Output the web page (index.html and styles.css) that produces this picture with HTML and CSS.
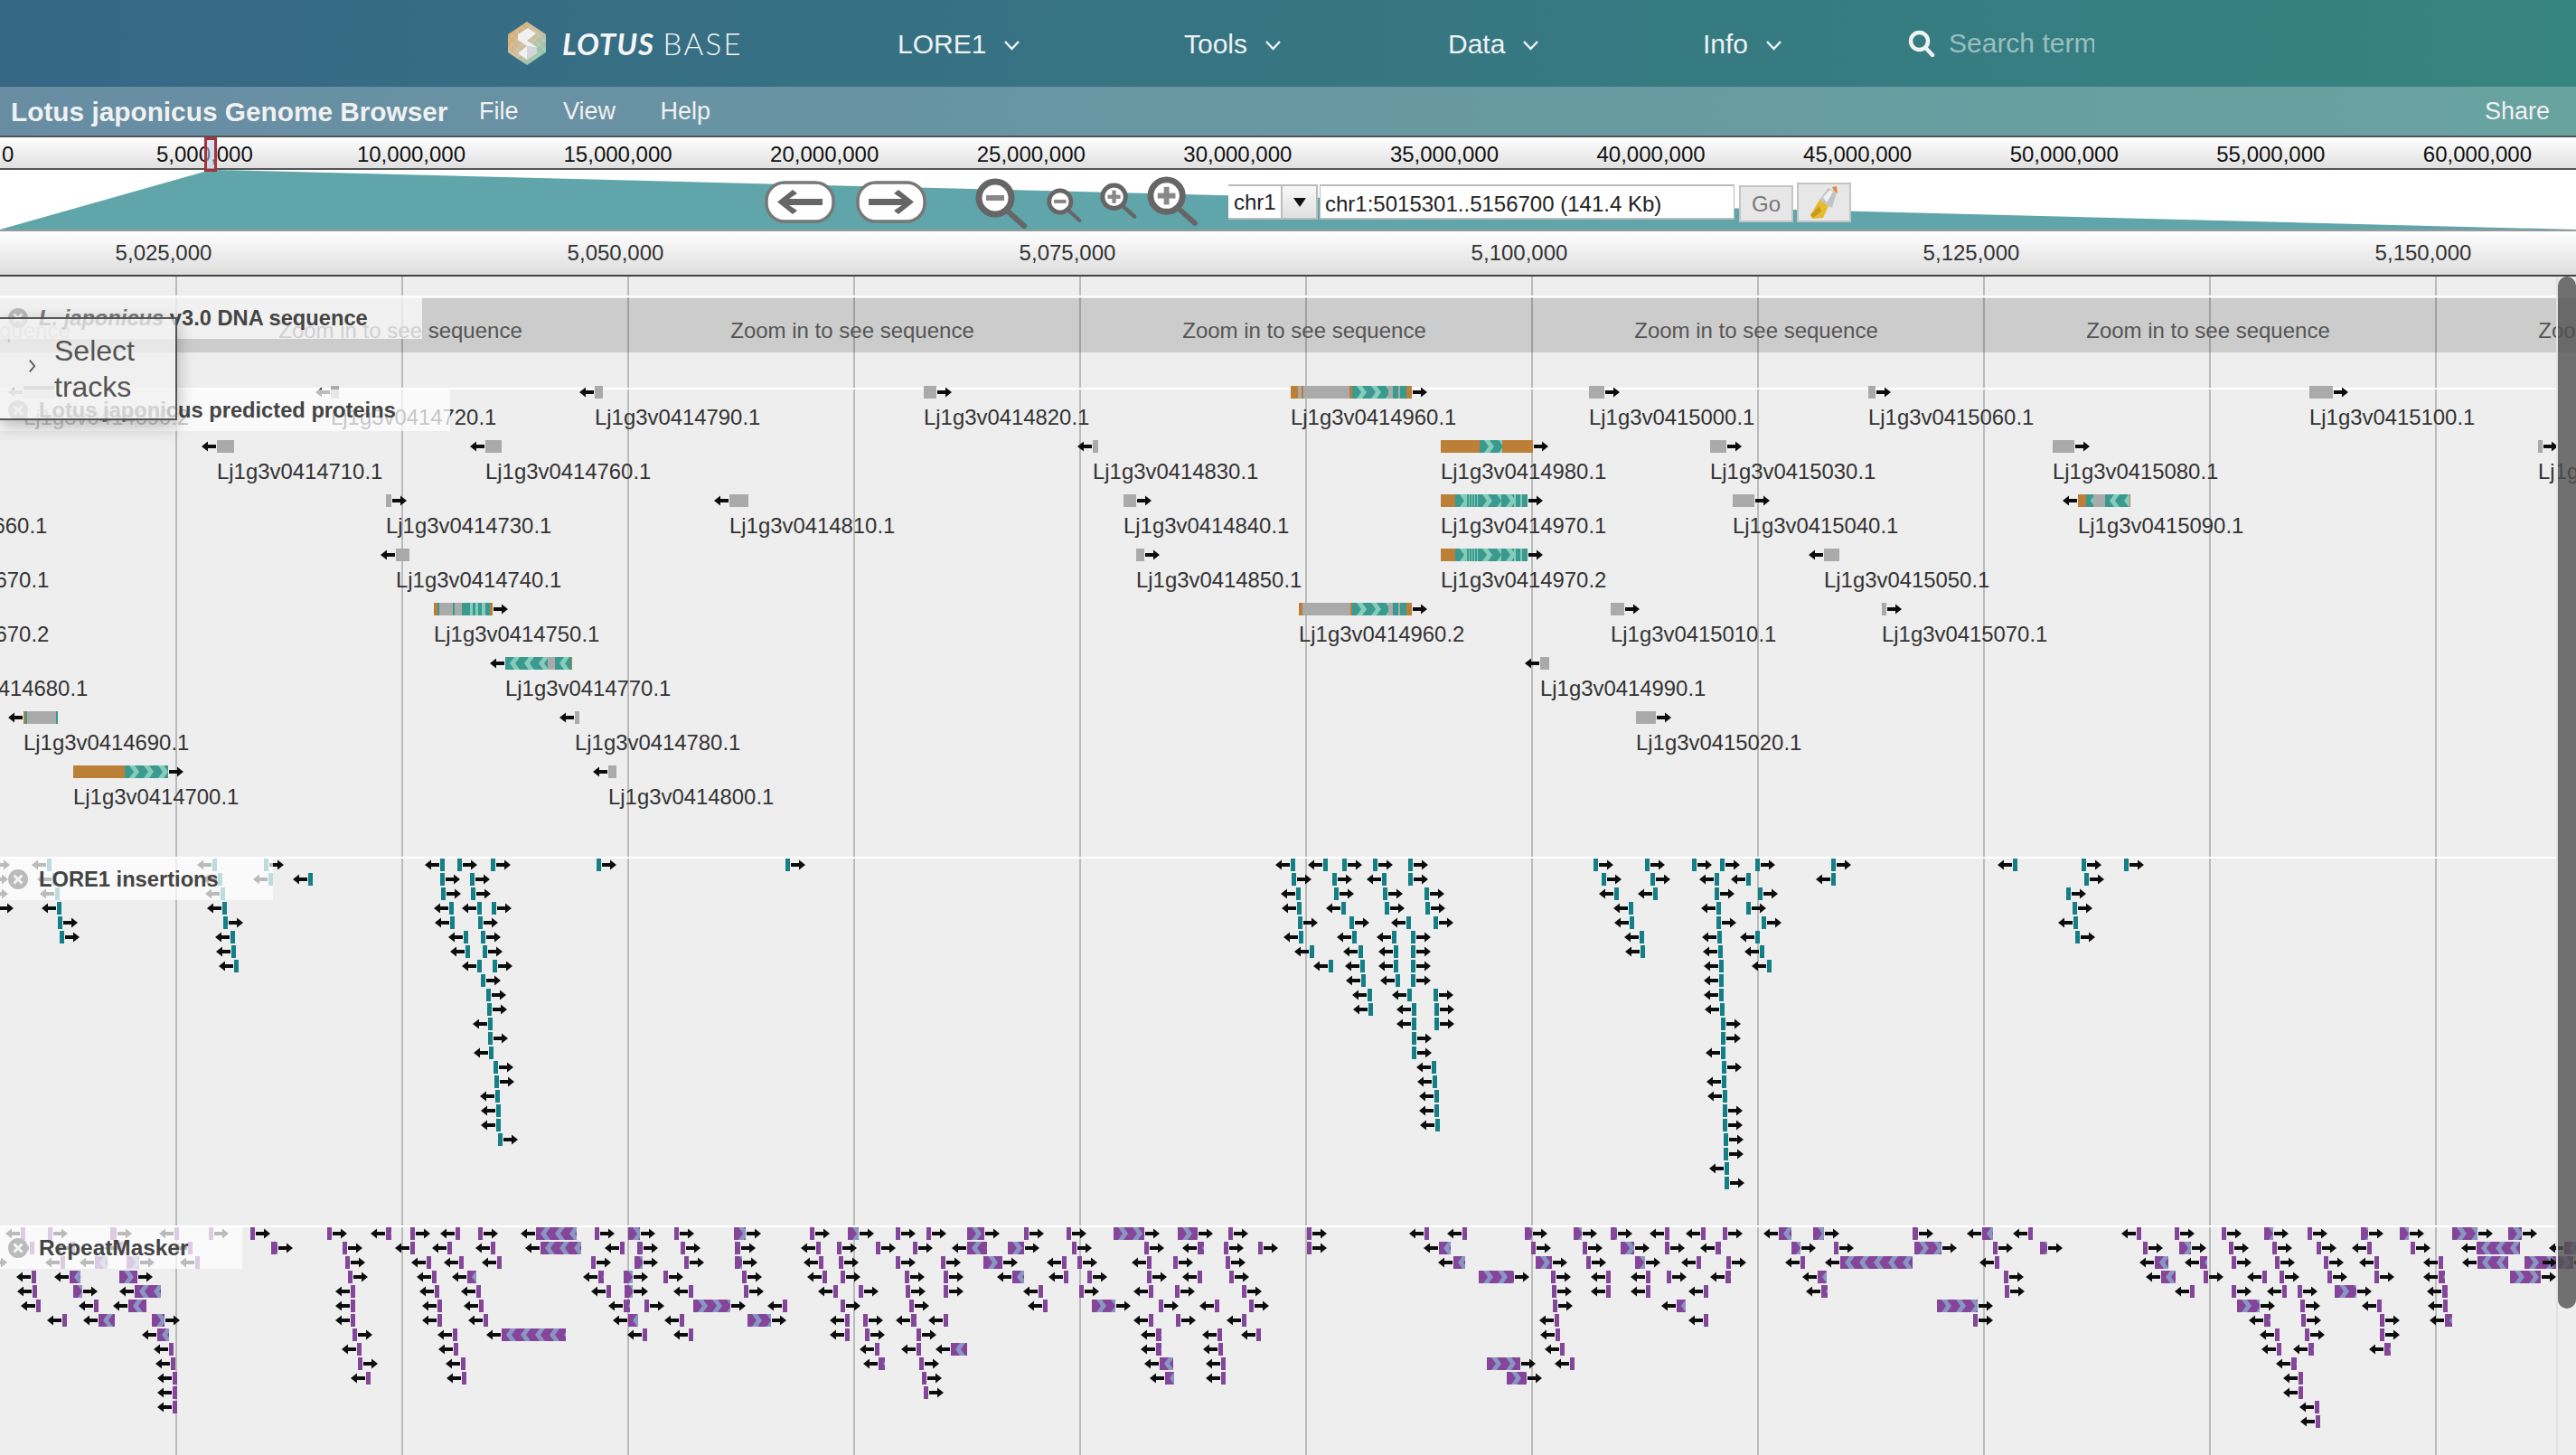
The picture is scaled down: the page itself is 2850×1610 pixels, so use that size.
FILE: index.html
```html
<!DOCTYPE html>
<html lang="en">
<head>
<meta charset="utf-8">
<title>Lotus japonicus Genome Browser</title>
<link rel="stylesheet" href="styles.css">
</head>
<body>
<header class="chrome">
  <nav class="topnav">
    <a class="brand">
      <svg class="brand-mark" viewBox="0 0 42 48">
        <defs>
          <linearGradient id="logoGrad" x1="0" y1="0" x2="1" y2="1">
            <stop offset="0" stop-color="#d9a55c"/>
            <stop offset=".5" stop-color="#cdbf9f"/>
            <stop offset="1" stop-color="#6ccab7"/>
          </linearGradient>
          <pattern id="logoMesh" width="7" height="7" patternUnits="userSpaceOnUse" patternTransform="rotate(45)">
            <path d="M0 0H7M0 0V7" stroke="#fff" stroke-opacity=".35" stroke-width="1" fill="none"/>
          </pattern>
        </defs>
        <polygon points="21,0 42,14 42,34 21,48 0,34 0,14" fill="url(#logoGrad)"/>
        <polygon points="21,0 42,14 42,34 21,48 0,34 0,14" fill="url(#logoMesh)"/>
        <polygon points="22,7 31,13 21,21 32,28 32,35 21,42 11,35 21,27 11,20 11,14" fill="#f1f1f1"/>
        <polygon points="21,27 32,28 32,35 21,42" fill="#d2d6d6"/>
      </svg>
      <span class="brand-text"><b>LOTUS</b> <span>BASE</span></span>
    </a>
    <a class="nav-item">LORE1<svg class="caret" viewBox="0 0 19 12"><polyline points="2,2 9.500,10 17,2"/></svg></a>
    <a class="nav-item">Tools<svg class="caret" viewBox="0 0 19 12"><polyline points="2,2 9.500,10 17,2"/></svg></a>
    <a class="nav-item">Data<svg class="caret" viewBox="0 0 19 12"><polyline points="2,2 9.500,10 17,2"/></svg></a>
    <a class="nav-item">Info<svg class="caret" viewBox="0 0 19 12"><polyline points="2,2 9.500,10 17,2"/></svg></a>
    <div class="search">
      <svg class="search-icon" viewBox="0 0 30 30"><circle cx="12.500" cy="12.500" r="9.500"/><line x1="19.500" y1="20" x2="27" y2="28"/></svg>
      <input class="search-input" type="text" placeholder="Search term">
    </div>
  </nav>
  <div class="subbar">
    <span class="app-title">Lotus japonicus Genome Browser</span>
    <a class="menu-item">File</a>
    <a class="menu-item">View</a>
    <a class="menu-item">Help</a>
    <a class="share">Share</a>
  </div>
</header>

<section class="overview-ruler">
  <span class="ov-cell ov-zero">0</span>
  <span class="ov-cell">5,000,000</span>
  <span class="ov-cell">10,000,000</span>
  <span class="ov-cell">15,000,000</span>
  <span class="ov-cell">20,000,000</span>
  <span class="ov-cell">25,000,000</span>
  <span class="ov-cell">30,000,000</span>
  <span class="ov-cell">35,000,000</span>
  <span class="ov-cell">40,000,000</span>
  <span class="ov-cell">45,000,000</span>
  <span class="ov-cell">50,000,000</span>
  <span class="ov-cell">55,000,000</span>
  <span class="ov-cell">60,000,000</span>
  <div class="viewport-marker"></div>
</section>

<section class="locator">
  <svg class="locator-wedge" viewBox="0 0 2850 66" preserveAspectRatio="none"><polygon points="0,66 226,2 240,0 2850,66"/></svg>
  <div class="controls">
    <svg class="pan-btn" viewBox="0 0 78 47"><rect x="2" y="2" width="74" height="43" rx="20" class="pan-shell"/><path class="pan-arrow" d="M14 23.500 L31 10 L36 14 L27 20 H64 V27 H27 L36 33 L31 37 Z"/></svg>
    <svg class="pan-btn pan-next" viewBox="0 0 78 47"><rect x="2" y="2" width="74" height="43" rx="20" class="pan-shell"/><path class="pan-arrow" d="M64 23.500 L47 10 L42 14 L51 20 H14 V27 H51 L42 33 L47 37 Z"/></svg>
    <svg class="mag mag-out-lg" viewBox="0 0 58 56"><line class="mag-handle" x1="34" y1="35" x2="54" y2="53"/><circle class="mag-ring" cx="22" cy="22" r="18"/><rect class="mag-sign" x="12" y="19" width="20" height="6"/></svg>
    <svg class="mag mag-out-sm" viewBox="0 0 58 56"><line class="mag-handle" x1="34" y1="35" x2="54" y2="53"/><circle class="mag-ring" cx="22" cy="22" r="18"/><rect class="mag-sign" x="12" y="19" width="20" height="6"/></svg>
    <svg class="mag mag-in-sm" viewBox="0 0 58 56"><line class="mag-handle" x1="34" y1="35" x2="54" y2="53"/><circle class="mag-ring" cx="22" cy="22" r="18"/><rect class="mag-sign" x="12" y="19" width="20" height="6"/><rect class="mag-sign" x="19" y="12" width="6" height="20"/></svg>
    <svg class="mag mag-in-lg" viewBox="0 0 58 56"><line class="mag-handle" x1="34" y1="35" x2="54" y2="53"/><circle class="mag-ring" cx="22" cy="22" r="18"/><rect class="mag-sign" x="12" y="19" width="20" height="6"/><rect class="mag-sign" x="19" y="12" width="6" height="20"/></svg>
    <div class="chr-select"><span class="chr-name">chr1</span><span class="chr-drop"><i class="chr-tri"></i></span></div>
    <div class="loc-input">chr1:5015301..5156700 (141.4 Kb)</div>
    <button class="go-btn" type="button">Go</button>
    <button class="hl-btn" type="button" aria-label="Highlight">
      <svg class="hl-icon" viewBox="0 0 36 40">
        <polygon points="3,34 13,17 23,24 17,37 5,38" fill="#e6bb2c"/>
        <polygon points="13,17 23,4 32,9 27,26 23,24" fill="#c4c4c4"/>
        <polygon points="17,14 25,6 28,8 21,20" fill="#f2f2f2"/>
        <polygon points="27,3 32,2 33,10 29,7" fill="#e8873a"/>
        <polygon points="3,34 13,24 15,30 6,37" fill="#c99a1c"/>
      </svg>
    </button>
  </div>
</section>

<section class="detail-ruler">
  <span class="dt-cell">5,025,000</span>
  <span class="dt-cell">5,050,000</span>
  <span class="dt-cell">5,075,000</span>
  <span class="dt-cell">5,100,000</span>
  <span class="dt-cell">5,125,000</span>
  <span class="dt-cell">5,150,000</span>
</section>

<main class="tracks">
  <section class="track track-dna">
    <div class="seq-band">
      <span class="seq-cell">Zoom in to see sequence</span>
      <span class="seq-cell">Zoom in to see sequence</span>
      <span class="seq-cell">Zoom in to see sequence</span>
      <span class="seq-cell">Zoom in to see sequence</span>
      <span class="seq-cell">Zoom in to see sequence</span>
      <span class="seq-cell">Zoom in to see sequence</span>
      <span class="seq-cell">Zoom in to see sequence</span>
    </div>
    <div class="track-label"><svg class="close-ico" viewBox="0 0 24 24"><circle cx="12" cy="12" r="11"/><path d="M7.500 7.500 L16.500 16.500 M16.500 7.500 L7.500 16.500"/></svg><span class="label-text"><i class="label-faded">L. japonicus</i> v3.0 DNA sequence</span></div>
  </section>
  <section class="track track-proteins">
    <svg class="features" id="proteins" width="2850" height="517"></svg>
    <div class="track-label"><svg class="close-ico" viewBox="0 0 24 24"><circle cx="12" cy="12" r="11"/><path d="M7.500 7.500 L16.500 16.500 M16.500 7.500 L7.500 16.500"/></svg><span class="label-text"><span class="label-faded">Lotus japoni</span>cus predicted proteins</span></div>
  </section>
  <section class="track track-lore">
    <svg class="features" id="lore" width="2850" height="406"></svg>
    <div class="track-label"><svg class="close-ico" viewBox="0 0 24 24"><circle cx="12" cy="12" r="11"/><path d="M7.500 7.500 L16.500 16.500 M16.500 7.500 L7.500 16.500"/></svg><span class="label-text">LORE1 insertions</span></div>
  </section>
  <section class="track track-repeat">
    <svg class="features" id="repeat" width="2850" height="252"></svg>
    <div class="track-label"><svg class="close-ico" viewBox="0 0 24 24"><circle cx="12" cy="12" r="11"/><path d="M7.500 7.500 L16.500 16.500 M16.500 7.500 L7.500 16.500"/></svg><span class="label-text label-wide">RepeatMasker</span></div>
  </section>

  <aside class="track-picker">
    <svg class="picker-chevron" viewBox="0 0 10 20"><polyline points="2,3 8,10 2,17"/></svg>
    <span class="picker-text">Select tracks</span>
  </aside>
  <div class="scroll-rail"><div class="scroll-thumb"></div></div>
</main>
<script src="tracks.js"></script>
</body>
</html>
```

FILE: styles.css
```css
* { box-sizing: border-box; }
html, body { margin: 0; padding: 0; }
body {
  width: 2850px;
  height: 1610px;
  overflow: hidden;
  background: #eee;
  font-family: "Liberation Sans", Arial, sans-serif;
  color: #333;
}

/* Top chrome */
.chrome { background: linear-gradient(90deg, #366785 0%, #368480 100%); }
.topnav {
  height: 96px;
  display: grid;
  grid-template-columns: 993px 317px 292px 282px 227px 1fr;
  align-items: center;
}
.brand { display: flex; align-items: center; margin-left: 562px; gap: 18px; }
.brand-mark { width: 42px; height: 48px; flex: none; }
.brand-text { font-family: Lato, sans-serif; font-size: 33px; color: #f6f6f6; white-space: nowrap; letter-spacing: 1px; }
.brand-text b { font-style: italic; font-weight: 700; }
.brand-text span { font-weight: 300; letter-spacing: 2.400px; }
.nav-item { display: flex; align-items: center; font-size: 30px; color: #eef2f3; gap: 19px; padding-top: 2px; }
.caret { width: 19px; height: 12px; fill: none; stroke: #eef2f3; stroke-width: 2.500; margin-top: 2px; }
.search { display: flex; align-items: center; gap: 15px; }
.search-icon { width: 30px; height: 30px; fill: none; stroke: #f0f3f3; stroke-width: 4.500; stroke-linecap: round; }
.search-input {
  width: 161px; padding: 0; border: 0; outline: 0; background: transparent;
  font: 30px "Liberation Sans", Arial, sans-serif; color: #fff;
}
.search-input::placeholder { color: rgba(255,255,255,.5); opacity: 1; }

.subbar {
  height: 54px;
  display: flex;
  align-items: center;
  padding: 0 29px 0 12px;
  background: rgba(255,255,255,.25);
  color: #f1f1f1;
  font-size: 27px;
}
.app-title { font-size: 29.800px; font-weight: 700; margin: 2px 34.500px 0 0; }
.menu-item { margin-right: 49.500px; }
.share { margin-left: auto; }

/* Overview ruler */
.overview-ruler {
  position: relative;
  height: 38px;
  display: flex;
  border-top: 2px solid #555;
  border-bottom: 2px solid #555;
  background: linear-gradient(#fff, #e0e0e0);
  color: #111;
  font-size: 24px;
  line-height: 38px;
  white-space: nowrap;
}
.ov-cell { flex: none; width: 228.600px; text-align: center; }
.ov-zero { margin-left: -116.500px; padding-left: 22px; }
.viewport-marker {
  position: absolute; left: 226px; top: 0; width: 14px; height: 38px;
  border: 3px solid #a8313a;
  background: rgba(190,210,240,.55);
  z-index: 2;
}

/* Locator */
.locator {
  position: relative;
  height: 68px;
  background: #fff;
  border-bottom: 2px solid #999;
  padding-left: 846px;
}
.locator-wedge { position: absolute; left: 0; top: 0; width: 2850px; height: 66px; fill: #5fa5a9; }
.controls { position: relative; display: flex; align-items: flex-start; height: 66px; }
.pan-btn { width: 78px; height: 47px; margin-top: 12px; flex: none; }
.pan-next { margin-left: 23px; }
.pan-shell { fill: #fff; stroke: #777; stroke-width: 3.500; }
.pan-arrow { fill: #666; }
.mag { flex: none; }
.mag-ring { fill: #fff; stroke: #666; stroke-width: 7; }
.mag-handle { stroke: #666; stroke-width: 6; stroke-linecap: round; }
.mag-sign { fill: #888; }
.mag-out-lg { width: 58px; height: 56px; margin: 9px 0 0 54px; }
.mag-out-sm { width: 39px; height: 40px; margin: 19px 0 0 21px; }
.mag-in-sm { width: 41px; height: 40px; margin: 14px 0 0 20px; }
.mag-in-lg { width: 57px; height: 57px; margin: 6px 0 0 11px; }
.chr-select {
  display: flex; flex: none; width: 99px; height: 39px; margin: 16px 0 0 33px;
  background: #fff; border-top: 2px solid #bbb; border-bottom: 2px solid #bbb;
  font-size: 24px; color: #222; line-height: 35px;
}
.chr-name { width: 58px; padding-left: 6px; }
.chr-drop {
  width: 41px; background: linear-gradient(#f8f8f8, #e0e0e0);
  border-left: 2px solid #bbb; border-right: 2px solid #bbb;
  display: flex; align-items: center; justify-content: center;
}
.chr-tri { width: 0; height: 0; border-left: 7px solid transparent; border-right: 7px solid transparent; border-top: 10px solid #111; }
.loc-input {
  flex: none; width: 459px; height: 39px; margin: 16px 0 0 2px; padding: 3px 0 0 5px;
  background: #fff; border: 2px solid #bbb; border-width: 2px 1px;
  font-size: 24px; line-height: 33px; color: #222; white-space: nowrap;
}
.go-btn, .hl-btn { flex: none; padding: 0; background: #e7e7e7; border: 2px solid #c4c4c4; }
.go-btn { width: 60px; height: 41px; margin: 17px 0 0 5px; font: 24px "Liberation Sans", Arial, sans-serif; color: #777; }
.hl-btn { width: 60px; height: 44px; margin: 14px 0 0 4px; display: flex; align-items: center; justify-content: center; }
.hl-icon { width: 36px; height: 40px; }

/* Detail ruler */
.detail-ruler {
  height: 50px;
  display: flex;
  padding-bottom: 2px;
  border-bottom: 2px solid #444;
  background: linear-gradient(#fff, #ddd);
  color: #333;
  font-size: 24px;
  line-height: 48px;
  white-space: nowrap;
}
.dt-cell { flex: none; width: 500px; text-align: center; }
.dt-cell:first-child { margin-left: -69px; }

/* Tracks canvas */
.tracks {
  position: relative;
  height: 1304px;
  padding-top: 21px;
  overflow: hidden;
  background-color: #eee;
  background-image: linear-gradient(90deg, #bbb 2px, transparent 2px);
  background-size: 250px 100%;
  background-position: 194px 0;
}
.track { position: relative; width: 2828px; border-top: 2px solid #fff; }
.track-dna { height: 102px; }
.track-proteins { height: 519px; }
.track-lore { height: 408px; }
.track-repeat { height: 254px; }
.features { display: block; overflow: visible; font-family: "Liberation Sans", Arial, sans-serif; }
.gene-label { font-size: 23.900px; fill: #333; }
.arrows { filter: blur(.4px); fill: #0c0c0c; }

.seq-band {
  display: flex;
  width: 2850px;
  height: 60px;
  margin-top: 1px;
  background: rgba(0,0,0,.14);
  color: #555;
  font-size: 24px;
  line-height: 72px;
  white-space: nowrap;
  overflow: hidden;
}
.seq-cell { flex: none; width: 500px; text-align: center; }
.seq-cell:first-child { margin-left: -307px; }

.track-label {
  position: absolute;
  left: 0;
  top: 0;
  height: 46px;
  display: flex;
  align-items: center;
  gap: 11px;
  padding: 0 60px 0 8px;
  background: rgba(255,255,255,.72);
  white-space: nowrap;
  font-size: 23.700px;
  font-weight: 700;
  color: #444;
}
.close-ico { flex: none; width: 24px; height: 24px; }
.close-ico circle { fill: #bbb; }
.close-ico path { stroke: #f4f4f4; stroke-width: 3; fill: none; }
.label-faded { color: #777; }
.label-wide { font-size: 24.400px; }

.track-picker {
  position: absolute;
  left: 0;
  top: 45px;
  width: 196px;
  height: 114px;
  display: flex;
  align-items: center;
  gap: 20px;
  padding-left: 31px;
  background: rgba(240,240,240,.74);
  border: 2px solid #555;
  border-left: 0;
  box-shadow: 0 6px 18px rgba(0,0,0,.28);
  font-size: 32px;
  line-height: 40px;
  color: #555;
  z-index: 3;
}
.picker-chevron { flex: none; width: 9px; height: 18px; margin-top: -6px; fill: none; stroke: #555; stroke-width: 2; }
.picker-text { width: 100px; }

.scroll-rail {
  position: absolute;
  right: 0;
  top: 0;
  bottom: 0;
  width: 22px;
  border-left: 2px solid #e2e2e2;
  z-index: 4;
}
.scroll-thumb {
  width: 20px;
  height: 1142px;
  border-radius: 10px;
  background: rgba(80,80,80,.8);
}
```

FILE: tracks.js
```js
(function () {
  var ORANGE = '#bc7f37', GREY = '#aaa';
  var TEAL = ['#3b9a8f', '#86ccbb'];
  var PURPLE = ['#84459a', '#8a96c2'];
  var TICK_TEAL = '#138088';
  var H = 14, PERIOD = 16;

  function rect(x0, x1, y, fill) {
    return '<rect x="' + x0 + '" y="' + y + '" width="' + (x1 - x0) + '" height="' + H + '" fill="' + fill + '"/>';
  }
  function chevrons(x0, x1, y, dir, pal) {
    var w = x1 - x0, s = '<svg x="' + x0 + '" y="' + y + '" width="' + w + '" height="' + H + '">';
    s += '<rect width="' + w + '" height="' + H + '" fill="' + pal[1] + '"/>';
    for (var k = 0; k * PERIOD < w + 6; k++) {
      var a = k * PERIOD - 5, pts;
      if (dir === 'R') {
        pts = [a, 0, a + 10, 0, a + 15, 7, a + 10, 14, a, 14, a + 5, 7];
      } else {
        pts = [a + 5, 0, a + 15, 0, a + 10, 7, a + 15, 14, a + 5, 14, a, 7];
        if (k === 0) { pts = [0, 0, 10, 0, 5, 7, 10, 14, 0, 14]; }
      }
      s += '<polygon points="' + pts.join(',') + '" fill="' + pal[0] + '"/>';
    }
    return s + '</svg>';
  }
  function arrow(x, yc, dir) {
    var d = dir === 'L'
      ? 'M' + x + ' ' + yc + 'l7 -5.500v3.500h9v4h-9v3.500z'
      : 'M' + x + ' ' + yc + 'l-7 -5.500v3.500h-9v4h9v3.500z';
    return '<path d="' + d + '"/>';
  }

  /* Insertion / repeat rows: "L23" = tick at 23, "R132-152" = box from 132 to 152 */
  function drawRows(id, rows, pal, tickColour) {
    var body = '', arrows = '';
    rows.forEach(function (row, r) {
      var y = r * 16;
      row.split(' ').forEach(function (it) {
        var m = /^([LR])(-?\d+)(?:-(\d+))?$/.exec(it);
        var dir = m[1], x0 = +m[2], x1 = m[3] ? +m[3] : x0 + 5;
        if (x1 - x0 <= 5) { body += rect(x0, x1, y, tickColour); }
        else { body += chevrons(x0, x1, y, dir, pal); }
        arrows += dir === 'L' ? arrow(x0 - 17, y + 7, 'L') : arrow(x1 + 17, y + 7, 'R');
      });
    });
    document.getElementById(id).innerHTML = body + '<g class="arrows">' + arrows + '</g>';
  }

  /* Gene models: [name, row, dir, labelX, segments], segment = [x0, x1, kind] */
  var CDS = function (a, b) { return [a, b, 'c']; };
  var genes = [
    ['Lj1g3v0414690.2', 0, 'L', 26, [[26, 60, 'g']]],
    ['Lj1g3v0414720.1', 0, 'L', 366, [[366, 375, 'g']]],
    ['Lj1g3v0414790.1', 0, 'L', 658, [[658, 667, 'g']]],
    ['Lj1g3v0414820.1', 0, 'R', 1022, [[1022, 1036, 'g']]],
    ['Lj1g3v0414960.1', 0, 'R', 1428, [[1428, 1436, 'o'], [1436, 1440, 'g'], [1440, 1442, 'o'], [1442, 1493, 'g'], [1493, 1496, 'o'], CDS(1496, 1536), [1536, 1541, 'g'], [1541, 1547, 'd'], [1547, 1549, 'g'], [1549, 1556, 'd'], [1556, 1562, 'o']]],
    ['Lj1g3v0415000.1', 0, 'R', 1758, [[1758, 1775, 'g']]],
    ['Lj1g3v0415060.1', 0, 'R', 2067, [[2067, 2075, 'g']]],
    ['Lj1g3v0415100.1', 0, 'R', 2555, [[2555, 2581, 'g']]],

    ['Lj1g3v0414710.1', 1, 'L', 240, [[240, 259, 'g']]],
    ['Lj1g3v0414760.1', 1, 'L', 537, [[537, 555, 'g']]],
    ['Lj1g3v0414830.1', 1, 'L', 1209, [[1209, 1215, 'g']]],
    ['Lj1g3v0414980.1', 1, 'R', 1594, [[1594, 1637, 'o'], CDS(1637, 1662), [1662, 1696, 'o']]],
    ['Lj1g3v0415030.1', 1, 'R', 1892, [[1892, 1910, 'g']]],
    ['Lj1g3v0415080.1', 1, 'R', 2271, [[2271, 2295, 'g']]],
    ['Lj1g3v0415110.1', 1, 'R', 2808, [[2808, 2813, 'g']]],

    ['Lj1g3v0414660.1', 2, 'R', -131, []],
    ['Lj1g3v0414730.1', 2, 'R', 427, [[427, 433, 'g']]],
    ['Lj1g3v0414810.1', 2, 'L', 807, [[807, 828, 'g']]],
    ['Lj1g3v0414840.1', 2, 'R', 1243, [[1243, 1257, 'g']]],
    ['Lj1g3v0414970.1', 2, 'R', 1594, [[1594, 1610, 'o'], [1610, 1690, 'l'], CDS(1610, 1622), [1623, 1625, 'd'], [1626, 1628, 'd'], [1629, 1631, 'd'], [1632, 1634, 'd'], CDS(1635, 1661), CDS(1661, 1675), [1677, 1682, 'd'], [1684, 1690, 'd']]],
    ['Lj1g3v0415040.1', 2, 'R', 1917, [[1917, 1941, 'g']]],
    ['Lj1g3v0415090.1', 2, 'L', 2299, [[2299, 2308, 'o'], CDS(2308, 2316), [2316, 2329, 'g'], CDS(2329, 2356), [2356, 2357, 'o']]],

    ['Lj1g3v0414670.1', 3, 'R', -129, []],
    ['Lj1g3v0414740.1', 3, 'L', 438, [[438, 453, 'g']]],
    ['Lj1g3v0414850.1', 3, 'R', 1257, [[1257, 1266, 'g']]],
    ['Lj1g3v0414970.2', 3, 'R', 1594, [[1594, 1610, 'o'], [1610, 1690, 'l'], CDS(1610, 1622), [1623, 1625, 'd'], [1626, 1628, 'd'], [1629, 1631, 'd'], [1632, 1634, 'd'], CDS(1635, 1661), CDS(1661, 1675), [1677, 1682, 'd'], [1684, 1690, 'd']]],
    ['Lj1g3v0415050.1', 3, 'L', 2018, [[2018, 2035, 'g']]],

    ['Lj1g3v0414670.2', 4, 'R', -129, []],
    ['Lj1g3v0414750.1', 4, 'R', 480, [[480, 484, 'o'], [484, 486, 'd'], [486, 501, 'g'], [501, 503, 'd'], [503, 511, 'g'], [511, 520, 'd'], [520, 523, 'l'], [523, 526, 'd'], [526, 529, 'l'], [529, 533, 'd'], [533, 537, 'l'], [537, 542, 'd'], [542, 545, 'o']]],
    ['Lj1g3v0414960.2', 4, 'R', 1437, [[1437, 1441, 'o'], [1441, 1494, 'g'], [1494, 1496, 'o'], CDS(1496, 1536), [1536, 1541, 'g'], [1541, 1547, 'd'], [1547, 1549, 'g'], [1549, 1556, 'd'], [1556, 1562, 'o']]],
    ['Lj1g3v0415010.1', 4, 'R', 1782, [[1782, 1797, 'g']]],
    ['Lj1g3v0415070.1', 4, 'R', 2082, [[2082, 2087, 'g']]],

    ['Lj1g3v0414680.1', 5, 'R', -86, []],
    ['Lj1g3v0414770.1', 5, 'L', 559, [CDS(559, 606), [606, 614, 'g'], CDS(614, 632), [632, 633, 'o']]],
    ['Lj1g3v0414990.1', 5, 'L', 1704, [[1704, 1714, 'g']]],

    ['Lj1g3v0414690.1', 6, 'L', 26, [[26, 28, 'o'], [28, 30, 'd'], [30, 62, 'g'], [62, 64, 'd']]],
    ['Lj1g3v0414780.1', 6, 'L', 636, [[636, 641, 'g']]],
    ['Lj1g3v0415020.1', 6, 'R', 1810, [[1810, 1832, 'g']]],

    ['Lj1g3v0414700.1', 7, 'R', 81, [[81, 138, 'o'], CDS(138, 186)]],
    ['Lj1g3v0414800.1', 7, 'L', 673, [[673, 682, 'g']]]
  ];
  var ROW_TOP = -4, ROW_GAP = 60; /* svg origin sits at page y 431 */
  var body = '', arrows = '';
  genes.forEach(function (g) {
    var y = ROW_TOP + g[1] * ROW_GAP, segs = g[4];
    segs.forEach(function (s) {
      var kind = s[2];
      if (kind === 'c') { body += chevrons(s[0], s[1], y, g[2], TEAL); }
      else { body += rect(s[0], s[1], y, kind === 'o' ? ORANGE : kind === 'd' ? TEAL[0] : kind === 'l' ? TEAL[1] : GREY); }
    });
    if (segs.length) {
      var lo = segs[0][0], hi = 0;
      segs.forEach(function (s) { hi = Math.max(hi, s[1]); });
      arrows += g[2] === 'L' ? arrow(lo - 17, y + 7, 'L') : arrow(hi + 17, y + 7, 'R');
    }
    body += '<text class="gene-label" x="' + g[3] + '" y="' + (y + 43) + '">' + g[0] + '</text>';
  });
  document.getElementById('proteins').innerHTML = body + '<g class="arrows">' + arrows + '</g>';

  var lore = [
    'R-11 L52 L235 R292 L487 R506 R543 R660 R869 L1428 L1464 R1485 R1519 R1558 R1763 R1820 R1872 R1903 R1942 R2026 L2227 R2303 R2350',
    'R-13 L58 L241 L297 L341 R487 R520 R1429 R1474 L1529 R1558 R1772 R1826 L1897 L1932 L2026 R2306',
    'R-13 L61 L244 R488 R521 L1434 R1476 R1530 R1576 L1786 L1829 R1897 R1945 R2286',
    'R-7 L63 L246 L497 L528 R544 L1435 L1484 R1532 R1577 L1802 L1899 R1932 R2293',
    'R64 R247 L498 R529 R1436 R1493 L1556 R1586 L1803 R1899 R1949 L2294',
    'R66 L255 L513 R532 L1437 L1496 L1540 R1561 L1814 L1900 L1942 R2296',
    'L256 L515 R534 L1449 L1503 L1542 R1561 L1815 L1901 L1947',
    'L259 L528 R545 L1470 L1505 L1542 R1561 L1902 L1955',
    'R532 L1506 L1544 R1561 L1902',
    'R538 L1513 L1557 R1586 L1902',
    'R539 L1514 L1562 R1587 L1903',
    'L540 L1562 R1587 R1904',
    'R540 R1562 R1904',
    'L541 R1562 L1904',
    'R546 L1584 R1905',
    'R547 L1585 L1905',
    'L548 L1587 L1906',
    'L549 L1587 R1906',
    'L549 L1588 R1906',
    'R551 R1907',
    'R1907',
    'L1908',
    'R1908'
  ];
  drawRows('lore', lore, TEAL, TICK_TEAL);

  var repeat = [
    'L23 R53 R122-129 L193 R231 R277 R362 L427-433 R454 L504 R529 L593-638 R658 R695-708 R746 R812-825 R896 R938-950 R991 R1025 R1070-1089 R1133 R1180 R1232-1266 R1303-1325 R1359 R1446 L1576 L1618 R1687-1695 R1741-1750 R1782-1789 L1842 L1882 R1906 L1968-1982 R2006-2018 R2116-2122 L2193-2205 L2244 L2364 R2406 R2458 R2505-2515 R2553 R2612-2620 R2655-2665 R2713-2741 R2775-2790',
    'L33 L77-83 L132-138 L208 R300-307 R379 L454 L495 L543 L598-643 L686 R705-711 R753 R813-819 L903 R926 R969 R1010 L1070-1092 R1115-1133 R1186 R1266 L1325-1332 R1354 R1392 R1446 L1592-1605 R1694 R1751 R1793-1808 R1842 L1898-1904 R1982-1992 R2029 R2118-2148 R2205 R2257-2265 R2371 R2411-2424 R2466 R2514 R2563 L2619 R2667 L2740-2788 L2837-2850',
    'R-14 L67 L105-119 R140-154 L216 R382 L472 L508 L550 R654 R702-711 R757 R813-821 L906 R928 R991 R1041 R1088-1109 L1175 R1192 L1269 R1298 R1356 L1608-1621 R1699-1717 R1755 R1809-1820 L1877 R1910 L1992 L2036-2116 L2207 L2384-2399 L2434-2442 R2469 R2517 R2571 L2627 L2698 L2741-2775 R2793-2812 R2812-2847',
    'L35 L77-89 R132-152 R385 L478 L517-527 L662-668 R690-700 R734 R821 L910 R930 R1001 R1044 L1120-1133 L1177 R1203 R1269 L1325 R1360 R1636-1675 R1716 L1777 L1821 R1844 L1909-1915 L2011-2021 R2217 L2391-2407 R2438 L2503 R2522 R2575 R2627 L2698-2705 R2777-2811',
    'L36 R81-91 L149-178 L388 L481 L527 L671 R691-700 L762 R823 L922 R950 R1002 R1044 L1149-1154 R1194 L1271 R1300 R1374 R1717 L1777 L1821 L1885 L2015-2022 R2218 L2423 R2469 L2525 R2542 R2583-2607 L2702-2708',
    'L40 L104 L142-162 L388 L484 L530 L690-697 R713 R767-808 L866 R930 R1006 L1154 R1208-1234 R1282 L1344 R1382 R1718 L1855-1865 R2143-2188 R2475-2500 R2545 L2630 L2703-2708',
    'L69 L109-127 R168-182 L388 L484 L535 L695-706 L752 R827-853 L935 R955 L1008-1014 L1044 L1271 R1301 L1374 L1720 L1885 R2183 L2505-2512 R2546 R2633 L2705-2713',
    'L174-187 R390 L501 L555-626 L711 L762 L935 R957 R1014 L1279-1285 L1347 L1390 L1721 L2517 R2550 R2633',
    'L187 L395 L502 L968 L1014 L1052-1070 L1279-1285 L1348 L1726 L2519 L2554-2560 L2638-2645',
    'L189 R396 L510 L972-979 R1017 L1283-1298 L1351 R1645-1682 L1737 L2535-2541',
    'L191 L405 L511 R1020 L1289-1299 L1351 R1667-1689 L2543',
    'L191 R1022 L2543',
    'L191 L2561',
    'L2562'
  ];
  drawRows('repeat', repeat, PURPLE, PURPLE[0]);
})();
```
